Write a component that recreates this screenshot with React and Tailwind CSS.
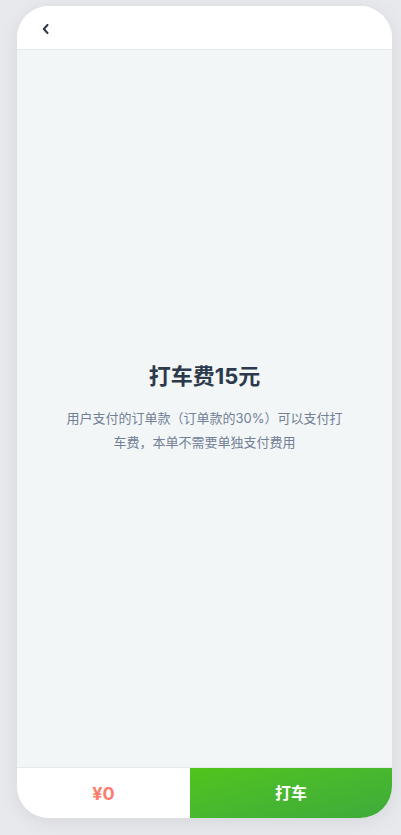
export default function App() {
  return (
    <div
      className="w-[401px] h-[835px] bg-[#e8e9ed] pt-[6px] pl-[17px]"
      style={{ fontFamily: 'Inter, "Noto Sans CJK SC", sans-serif' }}
    >
      <div className="w-[375px] h-[812px] rounded-[32px] overflow-hidden bg-[#f3f6f6] flex flex-col shadow-[0_4px_20px_rgba(0,0,0,0.08)]">
        {/* header */}
        <div className="h-[44px] bg-white border-b border-[#e6e9ec] flex items-center pl-[25px] shrink-0">
          <svg width="7" height="10" viewBox="0 0 7 10" fill="none" className="mt-[2px]">
            <path d="M5.5 1 L1.8 5 L5.5 9" stroke="#2d3748" strokeWidth="2" strokeLinecap="round" strokeLinejoin="round" />
          </svg>
        </div>

        {/* body */}
        <div className="flex-1 flex flex-col items-center justify-center pb-[2px]">
          <h1 className="text-[22px] leading-[28px] font-bold text-[#2c3a4b]">打车费15元</h1>
          <p className="mt-[16px] w-[282px] text-center text-[13px] leading-[24px] text-[#718096]">
            用户支付的订单款（订单款的30%）可以支付打车费，本单不需要单独支付费用
          </p>
        </div>

        {/* bottom bar */}
        <div className="h-[51px] flex shrink-0 border-t border-[#e6e9ec]">
          <div className="w-[173px] bg-white flex items-center justify-center">
            <span className="text-[18px] font-bold text-[#ff7b6b]">¥0</span>
          </div>
          <button
            type="button"
            className="flex-1 flex items-center justify-center bg-gradient-to-br from-[#52c41a] to-[#3dab3a] text-white text-[16px] font-bold"
          >
            打车
          </button>
        </div>
      </div>
    </div>
  )
}
